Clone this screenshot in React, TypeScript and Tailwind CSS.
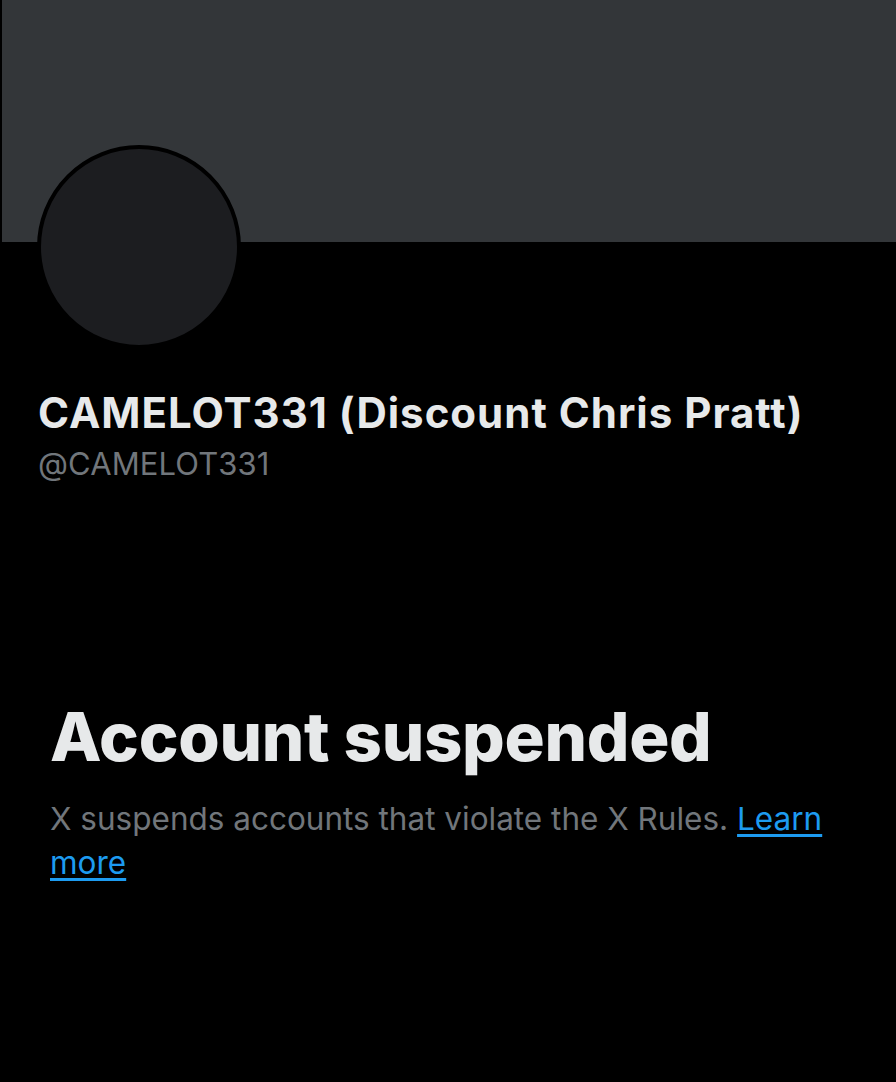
export default function App() {
  return (
    <div className="min-h-[1082px] w-[896px] bg-black">
      {/* banner */}
      <div className="ml-[2px] h-[242px] bg-[#333639]" />

      {/* avatar */}
      <div className="-mt-[97px] ml-[37px] h-[204px] w-[204px] rounded-full border-4 border-black bg-[#1c1d20]" />

      {/* name + handle */}
      <div className="mt-[38px] px-[38px] font-['Inter',sans-serif]">
        <div className="text-[42px] font-bold leading-[52px] tracking-[1px] text-[#e7e9ea]">
          CAMELOT331 (Discount Chris Pratt)
        </div>
        <div className="mt-[6px] text-[31px] leading-[38px] tracking-[0.1px] text-[#71767b]">@CAMELOT331</div>
      </div>

      {/* suspended notice */}
      <div className="mt-[214px] px-[50px] font-['Inter',sans-serif]">
        <h1 className="text-[67px] font-extrabold leading-[80px] tracking-[-0.3px] text-[#e7e9ea]">
          Account suspended
        </h1>
        <p className="mt-[20px] text-[31.5px] leading-[44px] text-[#71767b]">
          X suspends accounts that violate the X Rules.{' '}
          <a href="#" className="text-[#1d9bf0] underline underline-offset-4">
            Learn more
          </a>
        </p>
      </div>
    </div>
  )
}
